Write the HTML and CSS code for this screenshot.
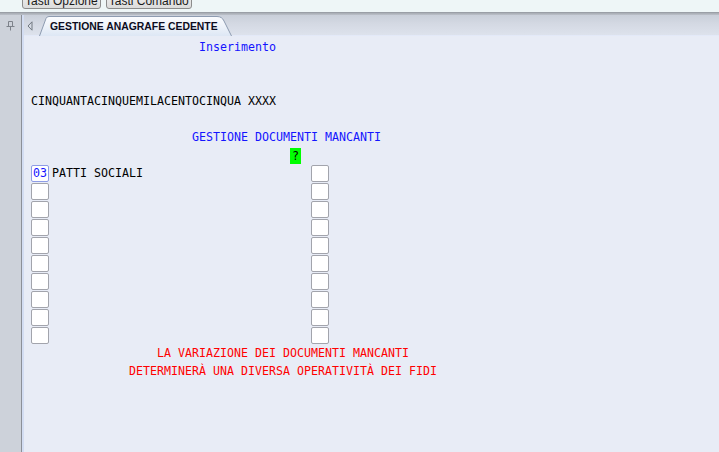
FILE: index.html
```html
<!DOCTYPE html>
<html>
<head>
<meta charset="utf-8">
<link rel="stylesheet" href="styles.css">
</head>
<body>
<div class="topbar">
  <div class="tbtn">Tasti Opzione</div>
  <div class="tbtn">Tasti Comando</div>
</div>
<div class="sep"></div>
<div class="main">
  <div class="sidebar">
    <svg class="pin" width="9" height="10" viewBox="0 0 9 10"><path d="M2.5 0.5h4v5h-4z M0.5 5.5h8 M4.5 5.5v4" fill="none" stroke="#7d828a" stroke-width="1"/></svg>
  </div>
  <div class="panel">
    <div class="tabstrip">
      <svg class="arrow" width="6" height="10" viewBox="0 0 6 10"><path d="M5 0.8 L1 5 L5 9.2 Z" fill="none" stroke="#707880" stroke-width="1"/></svg>
      <div class="tab">
        <svg class="tabshape" width="193" height="20" viewBox="0 0 193 20" preserveAspectRatio="none">
          <defs>
            <linearGradient id="tg" x1="0" y1="0" x2="0" y2="1">
              <stop offset="0" stop-color="#fbfcfe"/>
              <stop offset="0.5" stop-color="#eef3fa"/>
              <stop offset="1" stop-color="#dde7f5"/>
            </linearGradient>
          </defs>
          <path d="M0.5 20 L7 2.5 Q7.8 0.5 10 0.5 L178 0.5 Q183 0.5 185 5 L192.5 20" fill="url(#tg)" stroke="#8d9bb0" stroke-width="1"/>
        </svg>
        <span class="tabtext">GESTIONE ANAGRAFE CEDENTE</span>
      </div>
    </div>
    <div class="content">
      <div class="row blue"><span class="c24">Inserimento</span></div>
      <div class="row"></div>
      <div class="row"></div>
      <div class="row"><span>CINQUANTACINQUEMILACENTOCINQUA XXXX</span></div>
      <div class="row"></div>
      <div class="row blue"><span class="c23">GESTIONE DOCUMENTI MANCANTI</span></div>
      <div class="row"><span class="c37 q">?</span></div>
      <div class="drow"><span class="box sel">03</span><span>PATTI SOCIALI</span><span class="box"></span></div>
      <div class="drow"><span class="box"></span><span></span><span class="box"></span></div>
      <div class="drow"><span class="box"></span><span></span><span class="box"></span></div>
      <div class="drow"><span class="box"></span><span></span><span class="box"></span></div>
      <div class="drow"><span class="box"></span><span></span><span class="box"></span></div>
      <div class="drow"><span class="box"></span><span></span><span class="box"></span></div>
      <div class="drow"><span class="box"></span><span></span><span class="box"></span></div>
      <div class="drow"><span class="box"></span><span></span><span class="box"></span></div>
      <div class="drow"><span class="box"></span><span></span><span class="box"></span></div>
      <div class="drow"><span class="box"></span><span></span><span class="box"></span></div>
      <div class="row red"><span class="c18">LA VARIAZIONE DEI DOCUMENTI MANCANTI</span></div>
      <div class="row red"><span class="c14">DETERMINERÀ UNA DIVERSA OPERATIVITÀ DEI FIDI</span></div>
    </div>
  </div>
</div>
</body>
</html>
```

FILE: styles.css
```css
html, body {
  margin: 0;
  padding: 0;
}
body {
  width: 719px;
  height: 452px;
  overflow: hidden;
  background: #e8ecf6;
  font-family: "Liberation Sans", Arial, sans-serif;
  display: flex;
  flex-direction: column;
}
.topbar {
  height: 12px;
  flex: none;
  background: #eef6f7;
  border-bottom: 1px solid #9a9fa6;
  display: flex;
  gap: 5px;
  padding-left: 22px;
  overflow: hidden;
}
.tbtn {
  margin-top: -10px;
  height: 19px;
  line-height: 21px;
  font-size: 12px;
  color: #1a1a1a;
  padding: 0 2px;
  border: 1px solid #8c8c8c;
  border-radius: 3px;
  background: linear-gradient(#f4f4f4, #dcdcdc);
  box-sizing: border-box;
  white-space: nowrap;
  overflow: hidden;
}
.sep {
  height: 2px;
  flex: none;
  background: linear-gradient(#a6abb2, #bcc1c9);
}
.main {
  flex: 1;
  display: flex;
  min-height: 0;
}
.sidebar {
  width: 22px;
  flex: none;
  background: #cdd2da;
  border-right: 1px solid #8c9098;
  display: flex;
  justify-content: center;
  align-items: flex-start;
  padding-top: 6px;
  box-sizing: border-box;
}
.pin {
  display: block;
}
.panel {
  flex: 1;
  display: flex;
  flex-direction: column;
  border-left: 2px solid #d3ddf2;
}
.tabstrip {
  height: 21px;
  flex: none;
  background: linear-gradient(#c9cfd9 0px, #d4d9e3 9px, #dde2ec 20px);
  border-bottom: 1px solid #e3e9f8;
  display: flex;
  align-items: flex-end;
  padding-left: 3px;
  box-sizing: border-box;
}
.arrow {
  display: block;
  align-self: center;
  margin-top: 2px;
}
.tab {
  position: relative;
  margin-left: 6px;
  width: 193px;
  height: 19px;
  display: flex;
  align-items: center;
}
.tabshape {
  position: absolute;
  left: 0;
  top: 0;
  display: block;
}
.tabtext {
  position: relative;
  padding-left: 11px;
  padding-top: 1px;
  font-weight: bold;
  font-size: 10.4px;
  color: #0c0c20;
  white-space: nowrap;
}
.content {
  flex: 1;
  padding: 2px 0 0 7px;
  font-family: "DejaVu Sans Mono", "Liberation Mono", monospace;
  font-size: 11.63px;
  color: #000;
}
.row {
  height: 18px;
  line-height: 18px;
  white-space: pre;
}
.blue { color: #1414ff; }
.red { color: #ff0000; }
.c14 { padding-left: 14ch; }
.c18 { padding-left: 18ch; }
.c23 { padding-left: 23ch; }
.c24 { padding-left: 24ch; }
.c37 { margin-left: 37ch; }
.q {
  display: inline-block;
  background: #00ff00;
  height: 16px;
  line-height: 16px;
  padding: 0 2px;
  margin-top: 2px;
  vertical-align: top;
  color: #000;
}
.drow {
  height: 18px;
  display: grid;
  grid-template-columns: 3ch 37ch auto;
  align-items: center;
  line-height: 18px;
  white-space: pre;
}
.box {
  display: block;
  width: 18px;
  height: 17px;
  box-sizing: border-box;
  background: #ffffff;
  border: 1px solid #a2a4ac;
  border-radius: 2px;
  line-height: 15px;
  padding-left: 1px;
  color: #1414ff;
  margin-top: 1px;
}
.box.sel {
  border-color: #8e9ce6;
}
```
